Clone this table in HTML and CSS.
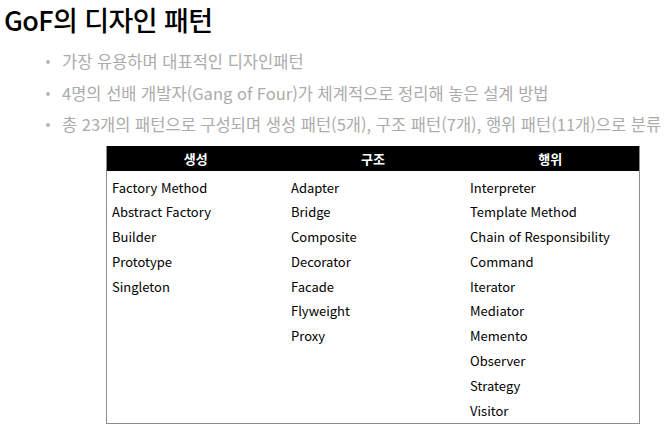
FILE: index.html
```html
<!DOCTYPE html>
<html lang="ko">
<head>
<meta charset="utf-8">
<link rel="stylesheet" href="styles.css">
</head>
<body>
<h1 class="title">GoF의 디자인 패턴</h1>
<ul class="bullets">
  <li>가장 유용하며 대표적인 디자인패턴</li>
  <li>4명의 선배 개발자(Gang of Four)가 체계적으로 정리해 놓은 설계 방법</li>
  <li>총 23개의 패턴으로 구성되며 생성 패턴(5개), 구조 패턴(7개), 행위 패턴(11개)으로 분류</li>
</ul>
<div class="table">
  <div class="head">
    <div class="th">생성</div>
    <div class="th">구조</div>
    <div class="th">행위</div>
  </div>
  <div class="body">
    <div class="col">
      <div class="cell">Factory Method</div>
      <div class="cell">Abstract Factory</div>
      <div class="cell">Builder</div>
      <div class="cell">Prototype</div>
      <div class="cell">Singleton</div>
    </div>
    <div class="col">
      <div class="cell">Adapter</div>
      <div class="cell">Bridge</div>
      <div class="cell">Composite</div>
      <div class="cell">Decorator</div>
      <div class="cell">Facade</div>
      <div class="cell">Flyweight</div>
      <div class="cell">Proxy</div>
    </div>
    <div class="col">
      <div class="cell">Interpreter</div>
      <div class="cell">Template Method</div>
      <div class="cell">Chain of Responsibility</div>
      <div class="cell">Command</div>
      <div class="cell">Iterator</div>
      <div class="cell">Mediator</div>
      <div class="cell">Memento</div>
      <div class="cell">Observer</div>
      <div class="cell">Strategy</div>
      <div class="cell">Visitor</div>
    </div>
  </div>
</div>
</body>
</html>
```
FILE: styles.css
```css
html, body { margin: 0; padding: 0; background: #fff; }
body {
  width: 666px;
  height: 434px;
  overflow: hidden;
  font-family: "Noto Sans CJK KR", "Noto Sans", sans-serif;
}
.title {
  margin: 0;
  padding: 2px 0 0 4px;
  font-size: 27px;
  font-weight: 500;
  line-height: 36px;
  color: #000;
  letter-spacing: -0.6px;
}
.bullets {
  list-style: none;
  margin: 8px 0 0 0;
  padding: 0 0 0 44px;
  white-space: nowrap;
}
.bullets li {
  position: relative;
  padding-left: 18px;
  font-size: 16.5px;
  line-height: 31.5px;
  color: #ababab;
}
.bullets li::before {
  content: "";
  position: absolute;
  left: 2px;
  top: 14px;
  width: 4px;
  height: 4px;
  border-radius: 50%;
  background: #b5b5b5;
}
.table {
  margin: 5px 0 0 106px;
  width: 534px;
  border: 1px solid #8c8c8c;
  border-top: none;
  box-sizing: border-box;
}
.head {
  display: grid;
  grid-template-columns: 1fr 1fr 1fr;
  background: #000;
  height: 25px;
  align-items: center;
}
.th {
  color: #fff;
  font-weight: 700;
  font-size: 13px;
  text-align: center;
}
.body {
  display: grid;
  grid-template-columns: 179px 179px 1fr;
  padding: 5px 0 0 5px;
}
.cell {
  font-size: 13px;
  line-height: 24.8px;
  color: #000;
  white-space: nowrap;
}
```
